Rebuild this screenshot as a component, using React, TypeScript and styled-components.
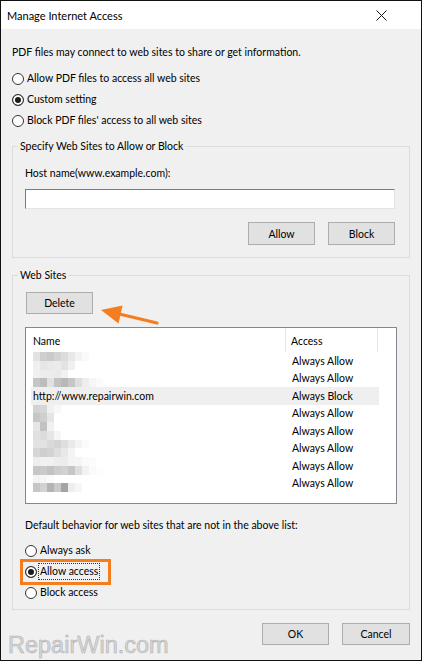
import React from 'react';
import styled, { createGlobalStyle } from 'styled-components';

const GlobalStyle = createGlobalStyle`
  html, body {
    margin: 0;
    padding: 0;
    background: #f0f0f0;
  }
  body {
    font-family: Lato, 'Open Sans', sans-serif;
  }
  * {
    box-sizing: border-box;
  }
`;

const ORANGE = '#f47d20';

const Window = styled.div`
  position: relative;
  width: 422px;
  height: 661px;
  border: 1px solid #111;
  background: #f0f0f0;
  display: flex;
  flex-direction: column;
  font-size: 10.5px;
  color: #000;
  overflow: hidden;
`;

const TitleBar = styled.div`
  height: 28px;
  flex: none;
  background: #fff;
  display: flex;
  align-items: center;
  justify-content: space-between;
  padding: 0 34px 0 6px;
  font-size: 11px;
`;

const Body = styled.div`
  flex: 1;
  padding: 15px 11px 0 11px;
  display: flex;
  flex-direction: column;
`;

const Text = styled.div<{ $top?: number }>`
  margin-top: ${p => p.$top ?? 0}px;
  line-height: 16px;
  white-space: nowrap;
`;

const RadioList = styled.div<{ $top: number }>`
  margin-top: ${p => p.$top}px;
  display: flex;
  flex-direction: column;
`;

const RadioLabel = styled.label<{ $highlight?: boolean }>`
  position: relative;
  height: 21px;
  width: fit-content;
  display: flex;
  align-items: center;
  gap: 2px;
  line-height: 16px;

  ${p =>
    p.$highlight &&
    `
    &::after {
      content: '';
      position: absolute;
      left: -5px;
      right: -12px;
      top: -2.5px;
      bottom: -2.5px;
      border: 3px solid ${ORANGE};
    }
  `}
`;

const RadioCircle = styled.span<{ $checked?: boolean }>`
  width: 12px;
  height: 12px;
  border-radius: 50%;
  border: 1px solid #333;
  background: ${p => (p.$checked ? '#1a1a1a' : '#fff')};
  box-shadow: inset 0 0 0 2px #fff;
  flex: none;
`;

const RadioText = styled.span<{ $focused?: boolean }>`
  padding: 0 1px;
  outline: ${p => (p.$focused ? '1px dotted #333' : 'none')};
  line-height: 15px;
`;

const Group = styled.fieldset<{ $top: number; $pad: string }>`
  margin: ${p => p.$top}px 0 0;
  padding: ${p => p.$pad};
  border: 1px solid #dcdcdc;
  min-width: 0;
`;

const Legend = styled.legend`
  padding: 0 2px;
  margin-left: -7px;
  line-height: 16px;
`;

const HostInput = styled.input`
  display: block;
  width: 100%;
  height: 20px;
  margin-top: 8px;
  border: 1px solid;
  border-color: #7a7a7a #e3e3e3 #e3e3e3 #7a7a7a;
  background: #fff;
  outline: none;
`;

const ButtonRow = styled.div<{ $top: number }>`
  margin-top: ${p => p.$top}px;
  display: flex;
  justify-content: flex-end;
  gap: 13px;
`;

const Button = styled.button<{ $h?: number; $w?: number }>`
  width: ${p => p.$w ?? 67}px;
  height: ${p => p.$h ?? 22}px;
  padding: 0;
  background: #e1e1e1;
  border: 1px solid #adadad;
  font-family: inherit;
  font-size: 10.5px;
  color: #000;
`;

const DeleteButton = styled(Button)`
  margin-left: 1px;
`;

const List = styled.div`
  margin-top: 13px;
  height: 177px;
  border: 1px solid #828790;
  background: #fff;
  display: flex;
  flex-direction: column;
`;

const ListHeader = styled.div`
  height: 24px;
  display: grid;
  grid-template-columns: 260px 92px;
  align-items: stretch;
`;

const HeaderCell = styled.div<{ $pad: number }>`
  display: flex;
  align-items: center;
  padding: 1px 0 0 ${p => p.$pad}px;
  border-right: 1px solid #e5e5e5;
`;

const ListRow = styled.div<{ $selected?: boolean }>`
  height: 17.5px;
  margin-left: 5px;
  width: 348px;
  display: grid;
  grid-template-columns: 256px 1fr;
  align-items: center;
  background: ${p => (p.$selected ? '#efefef' : 'transparent')};
`;

const NameCell = styled.div`
  padding-left: 2px;
  height: 100%;
  display: flex;
  align-items: center;
  white-space: nowrap;
`;

const AccessCell = styled.div`
  padding-left: 5px;
`;

const Mosaic = styled.div`
  display: flex;
  flex-direction: column;
`;

const MosaicLine = styled.div`
  display: flex;
  height: 8.75px;
`;

const MosaicCell = styled.span`
  width: 7px;
  height: 100%;
`;

const Footer = styled.div`
  margin-top: 13px;
  display: flex;
  justify-content: space-between;
  align-items: flex-start;
`;

const Watermark = styled.div`
  margin: 11px 0 0 -4px;
  font-family: 'Liberation Sans', Arial, sans-serif;
  font-size: 23.5px;
  line-height: 23px;
  color: #d9d9d9;
  -webkit-text-stroke: 0.6px #b0b0b0;
`;

const Annotation = styled.svg`
  position: absolute;
  left: 0;
  top: 0;
  pointer-events: none;
`;

type Site = { name?: string; blur?: string[][]; access: string; selected?: boolean };

const sites: Site[] = [
  {
    blur: [
      ['#e2e2e2', '#cfcfcf', '#c9c9c9', '#d3d3d3', '#dcdcdc', '#e8e8e8', '#f3f3f3', '#fafafa'],
      ['#efefef', '#e6e6e6', '#e9e9e9', '#ebebeb', '#e3e3e3', '#f0f0f0'],
    ],
    access: 'Always Allow',
  },
  {
    blur: [
      ['#f0f0f0', '#ededed', '#ececec', '#eaeaea', '#f1f1f1'],
      ['#c6c6c6', '#bdbdbd', '#e1e1e1', '#c2c2c2', '#b8b8b8', '#c6c6c6', '#dedede', '#eeeeee', '#f6f6f6', '#fbfbfb'],
    ],
    access: 'Always Allow',
  },
  { name: 'http://www.repairwin.com', access: 'Always Block', selected: true },
  {
    blur: [
      ['#d2d2d2', '#d6d6d6', '#f1f1f1', '#f8f8f8'],
      ['#c6c6c6', '#cfcfcf', '#e5e5e5'],
    ],
    access: 'Always Allow',
  },
  {
    blur: [
      ['#e6e6e6', '#c2c2c2', '#f1f1f1'],
      ['#e0e0e0', '#dcdcdc', '#e6e6e6', '#f6f6f6'],
    ],
    access: 'Always Allow',
  },
  {
    blur: [
      ['#e2e2e2', '#e2e2e2', '#d9d9d9', '#d4d4d4', '#dedede', '#e9e9e9', '#f4f4f4', '#fbfbfb'],
      ['#d6d6d6', '#cecece', '#d3d3d3', '#dedede', '#e8e8e8', '#f4f4f4'],
    ],
    access: 'Always Allow',
  },
  {
    blur: [
      ['#ededed', '#f1f1f1', '#f1f1f1', '#ededed', '#ececec', '#f4f4f4', '#f5f5f5', '#fafafa', '#fcfcfc'],
      ['#c6c6c6', '#cacaca', '#c2c2c2', '#cdcdcd', '#d2d2d2', '#c6c6c6', '#dedede', '#f2f2f2', '#fafafa', '#fdfdfd'],
    ],
    access: 'Always Allow',
  },
  {
    blur: [
      ['#f4f4f4', '#f6f6f6', '#fbfbfb'],
      ['#c6c6c6', '#d2d2d2', '#b4b4b4', '#cacaca', '#a4a4a4', '#eeeeee', '#f6f6f6'],
    ],
    access: 'Always Allow',
  },
];

const CloseIcon = () => (
  <svg width="11" height="11" viewBox="0 0 11 11">
    <path d="M0.5 0.5 L10.5 10.5 M10.5 0.5 L0.5 10.5" stroke="#111" strokeWidth="1" />
  </svg>
);

const Radio: React.FC<{ label: string; checked?: boolean; highlight?: boolean; focused?: boolean }> = ({
  label,
  checked,
  highlight,
  focused,
}) => (
  <RadioLabel $highlight={highlight}>
    <RadioCircle $checked={checked} />
    <RadioText $focused={focused}>{label}</RadioText>
  </RadioLabel>
);

export default function App() {
  return (
    <>
      <GlobalStyle />
      <Window>
        <TitleBar>
          <span>Manage Internet Access</span>
          <CloseIcon />
        </TitleBar>
        <Body>
          <Text>PDF files may connect to web sites to share or get information.</Text>
          <RadioList $top={8}>
            <Radio label="Allow PDF files to access all web sites" />
            <Radio label="Custom setting" checked />
            <Radio label="Block PDF files' access to all web sites" />
          </RadioList>

          <Group $top={7} $pad="11px 14px 12px 12px">
            <Legend>Specify Web Sites to Allow or Block</Legend>
            <Text>Host name(www.example.com):</Text>
            <HostInput type="text" />
            <ButtonRow $top={13}>
              <Button $h={23}>Allow</Button>
              <Button $h={23}>Block</Button>
            </ButtonRow>
          </Group>

          <Group $top={9} $pad="9px 12px 6px 12px">
            <Legend>Web Sites</Legend>
            <div>
              <DeleteButton>Delete</DeleteButton>
            </div>
            <List>
              <ListHeader>
                <HeaderCell $pad={7}>Name</HeaderCell>
                <HeaderCell $pad={5}>Access</HeaderCell>
              </ListHeader>
              {sites.map((s, i) => (
                <ListRow key={i} $selected={s.selected}>
                  <NameCell>
                    {s.name ?? (
                      <Mosaic>
                        {s.blur!.map((line, j) => (
                          <MosaicLine key={j}>
                            {line.map((c, k) => (
                              <MosaicCell key={k} style={{ background: c }} />
                            ))}
                          </MosaicLine>
                        ))}
                      </Mosaic>
                    )}
                  </NameCell>
                  <AccessCell>{s.access}</AccessCell>
                </ListRow>
              ))}
            </List>
            <Text $top={13}>Default behavior for web sites that are not in the above list:</Text>
            <RadioList $top={7}>
              <Radio label="Always ask" />
              <Radio label="Allow access" checked highlight focused />
              <Radio label="Block access" />
            </RadioList>
          </Group>

          <Footer>
            <Watermark>RepairWin.com</Watermark>
            <ButtonRow $top={0}>
              <Button>OK</Button>
              <Button $w={68}>Cancel</Button>
            </ButtonRow>
          </Footer>
        </Body>

        <Annotation width="422" height="661" viewBox="0 0 422 661">
          <line x1="156" y1="322" x2="112" y2="311.5" stroke={ORANGE} strokeWidth="3.2" strokeLinecap="round" />
          <polygon points="100,309 121.5,304.5 117.5,322.5" fill={ORANGE} />
        </Annotation>
      </Window>
    </>
  );
}
